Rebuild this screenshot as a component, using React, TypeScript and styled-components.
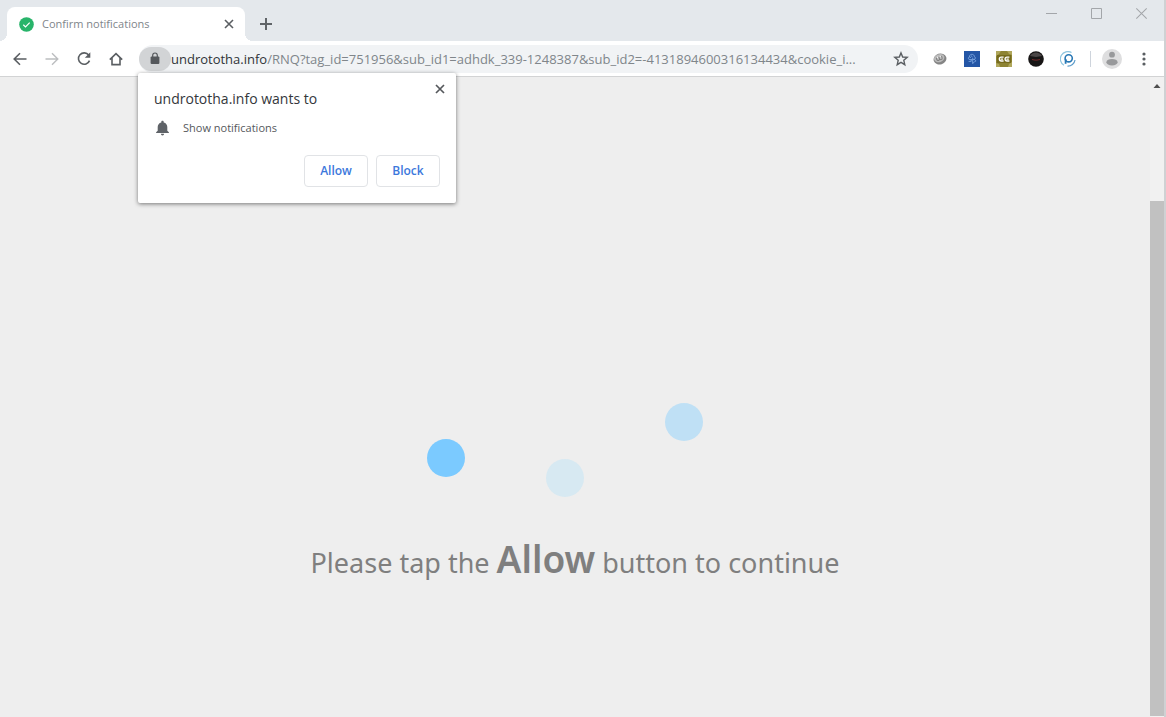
import React from "react";
import styled, { createGlobalStyle } from "styled-components";

const GlobalStyle = createGlobalStyle`
  *, *::before, *::after { box-sizing: border-box; }
  html, body, #root { height: 100%; }
  body {
    margin: 0;
    background: #eeeeee;
    font-family: "Open Sans", "Noto Sans", sans-serif;
    overflow: hidden;
  }
  button, input { font: inherit; }
`;

const Window = styled.div`
  display: flex;
  flex-direction: column;
  height: 100%;
  border-right: 2px solid #cfd1d3;
  background: #eeeeee;
`;

const TabStrip = styled.header`
  display: flex;
  align-items: flex-end;
  height: 41px;
  padding-left: 7px;
  background: #e4e8ec;
`;

const Tab = styled.div`
  position: relative;
  display: flex;
  align-items: center;
  width: 238px;
  height: 34px;
  padding: 0 8px 0 12px;
  border-radius: 8px 8px 0 0;
  background: #ffffff;

  &::before, &::after {
    content: "";
    position: absolute;
    bottom: 0;
    width: 8px;
    height: 8px;
  }
  &::before {
    left: -8px;
    background: radial-gradient(circle at 0 0, transparent 8px, #ffffff 8px);
  }
  &::after {
    right: -8px;
    background: radial-gradient(circle at 100% 0, transparent 8px, #ffffff 8px);
  }
`;

const TabTitle = styled.span`
  flex: 1;
  margin-left: 8px;
  color: #80858a;
  font-size: 11px;
  line-height: 16px;
`;

const IconButton = styled.button<{ $width?: number; $height?: number }>`
  display: flex;
  flex: none;
  align-items: center;
  justify-content: center;
  width: ${(p) => p.$width ?? 32}px;
  height: ${(p) => p.$height ?? 28}px;
  padding: 0;
  border: 0;
  background: none;
`;

const WindowControls = styled.div`
  display: flex;
  align-self: flex-start;
  margin-left: auto;
`;

const Toolbar = styled.nav`
  display: flex;
  align-items: center;
  height: 36px;
  padding: 0 4px 0 4px;
  border-bottom: 1px solid #d2d3d4;
  background: #ffffff;
`;

const AddressBar = styled.div`
  position: relative;
  display: flex;
  flex: 1;
  align-items: center;
  min-width: 0;
  height: 28px;
  margin: 0 6px 0 7px;
  border-radius: 14px;
  background: #f1f3f5;
`;

const SiteInfo = styled.button`
  display: flex;
  flex: none;
  align-items: center;
  justify-content: center;
  width: 32px;
  height: 24px;
  padding: 0;
  border: 0;
  border-radius: 12px;
  background: #d2d4d6;
`;

const Host = styled.label`
  color: #303338;
  font-size: 13px;
  line-height: 20px;
`;

const Path = styled.input`
  flex: 1;
  min-width: 0;
  height: 20px;
  padding: 0;
  border: 0;
  outline: 0;
  background: none;
  color: #80868b;
  font-size: 13px;
  line-height: 20px;
  text-overflow: ellipsis;
`;

const Separator = styled.span`
  width: 1px;
  height: 16px;
  margin: 0 5px 0 6px;
  background: #ced4dc;
`;

const Prompt = styled.section`
  position: absolute;
  top: 28px;
  left: -1px;
  z-index: 1;
  width: 318px;
  padding: 16px;
  border-radius: 2px;
  background: #ffffff;
  box-shadow: 0 1px 4px rgba(0, 0, 0, 0.5);
`;

const PromptClose = styled.div`
  position: absolute;
  top: 8px;
  right: 8px;
`;

const PromptTitle = styled.h2`
  margin: 0;
  color: #34373b;
  font-size: 14px;
  font-weight: 400;
  line-height: 20px;
`;

const Permission = styled.p`
  display: flex;
  align-items: center;
  gap: 12px;
  margin: 9px 0 17px;
  color: #55585c;
  font-size: 11px;
  line-height: 20px;
`;

const PromptActions = styled.div`
  display: flex;
  justify-content: flex-end;
  gap: 8px;
`;

const PromptButton = styled.button`
  width: 64px;
  height: 32px;
  padding: 0;
  border: 1px solid #e1e3e6;
  border-radius: 4px;
  background: #ffffff;
  color: #3c78dc;
  font-size: 12px;
  font-weight: 600;
  line-height: 20px;
`;

const Viewport = styled.div`
  display: flex;
  flex: 1;
  min-height: 0;
`;

const Page = styled.main`
  display: flex;
  flex: 1;
  flex-direction: column;
  align-items: center;
  justify-content: flex-end;
  padding-bottom: 122px;
`;

const Message = styled.p`
  margin: 30px 0 0;
  color: #7f7f7f;
  font-family: "Noto Sans", "Open Sans", sans-serif;
  font-size: 27px;
  line-height: 64px;
  white-space: nowrap;

  strong {
    font-size: 37px;
    font-weight: 600;
  }
`;

const ScrollTrack = styled.div`
  display: flex;
  flex-direction: column;
  width: 14px;
  background: #f1f1f1;
`;

const ScrollThumb = styled.div`
  flex: 1;
  margin: 108px 0 1px;
  background: #c1c1c1;
`;

const Cross = ({ size, color, width }: { size: number; color: string; width: number }) => (
  <svg width={size} height={size} viewBox="0 0 10 10" fill="none" stroke={color} strokeWidth={width}>
    <path d="M1 1l8 8M9 1L1 9" />
  </svg>
);

const toolbarStroke = { fill: "none", stroke: "#5a5e62", strokeWidth: 1.6 };

export default function App() {
  return (
    <>
      <GlobalStyle />
      <Window>
        <TabStrip>
          <Tab>
            <svg width="15" height="15" viewBox="0 0 15 15">
              <circle cx="7.5" cy="7.5" r="7.3" fill="#28b46a" />
              <path d="M4.3 7.8l2.200 2.100 4.200-4.300" fill="none" stroke="#ffffff" strokeWidth="1.2" />
            </svg>
            <TabTitle>Confirm notifications</TabTitle>
            <IconButton $width={16} $height={16} aria-label="Close tab">
              <Cross size={10} color="#5a5e62" width={1.6} />
            </IconButton>
          </Tab>
          <IconButton $width={42} $height={35} aria-label="New tab">
            <svg width="12" height="12" viewBox="0 0 12 12" stroke="#606468" strokeWidth="2">
              <path d="M6 0v12M0 6h12" />
            </svg>
          </IconButton>
          <WindowControls>
            <IconButton $width={45} $height={26} aria-label="Minimize">
              <svg width="11" height="11" viewBox="0 0 11 11" stroke="#a3a6aa">
                <path d="M0 5.5h11" />
              </svg>
            </IconButton>
            <IconButton $width={45} $height={26} aria-label="Maximize">
              <svg width="11" height="11" viewBox="0 0 11 11" stroke="#a3a6aa" fill="none">
                <path d="M.5.5h10v10H.5z" />
              </svg>
            </IconButton>
            <IconButton $width={45} $height={26} aria-label="Close window">
              <Cross size={13} color="#a3a6aa" width={0.8} />
            </IconButton>
          </WindowControls>
        </TabStrip>

        <Toolbar>
          <IconButton aria-label="Back">
            <svg width="16" height="16" viewBox="0 0 16 16" {...toolbarStroke}>
              <path d="M14.5 8H2.500M8 2.200L2.200 8 8 13.800" />
            </svg>
          </IconButton>
          <IconButton aria-label="Forward">
            <svg width="16" height="16" viewBox="0 0 16 16" {...toolbarStroke} stroke="#bcbec0" strokeWidth="1.4">
              <path d="M1.500 8h12M8 2.200L13.800 8 8 13.800" />
            </svg>
          </IconButton>
          <IconButton aria-label="Reload">
            <svg width="16" height="16" viewBox="0 0 16 16" {...toolbarStroke}>
              <path d="M12.700 4.100A5.700 5.700 0 1 0 13.500 9.600" />
              <path d="M14.300 1.300v5.500H8.800z" fill="#5a5e62" stroke="none" />
            </svg>
          </IconButton>
          <IconButton aria-label="Home">
            <svg width="16" height="16" viewBox="0 0 16 16" {...toolbarStroke}>
              <path d="M1.800 8.600L8 2.600l6.200 6M4 7v6.600h8V7" />
            </svg>
          </IconButton>

          <AddressBar>
            <SiteInfo aria-label="View site information">
              <svg width="10" height="13" viewBox="0 0 10 13">
                <rect x="0.6" y="4.6" width="8.8" height="7.4" rx="1" fill="#55585c" />
                <path d="M2.700 5V3.300a2.300 2.300 0 0 1 4.600 0V5" fill="none" stroke="#55585c" strokeWidth="1.2" />
              </svg>
            </SiteInfo>
            <Host htmlFor="address">undrototha.info</Host>
            <Path
              id="address"
              defaultValue="/RNQ?tag_id=751956&sub_id1=adhdk_339-1248387&sub_id2=-4131894600316134434&cookie_i..."
            />
            <IconButton $width={34} aria-label="Bookmark this tab">
              <svg width="16" height="16" viewBox="0 0 16 16" fill="none" stroke="#5a5e62" strokeWidth="1.4">
                <path d="M8 1.900l1.700 4.100 4.500.4-3.400 2.900 1 4.400L8 11.400l-3.800 2.300 1-4.400L1.800 6.400l4.500-.4z" />
              </svg>
            </IconButton>

            <Prompt aria-label="Permission request">
              <PromptClose>
                <IconButton $width={16} $height={16} aria-label="Dismiss">
                  <Cross size={10} color="#55585c" width={1.7} />
                </IconButton>
              </PromptClose>
              <PromptTitle>undrototha.info wants to</PromptTitle>
              <Permission>
                <svg width="17" height="16" viewBox="0 0 17 16" fill="#5f6368">
                  <path d="M8.500 .7c.8 0 1.200.5 1.200 1.200v.5c2.300.5 3.600 2.300 3.600 4.700v3.600l1.600 1.600v.8H2.100v-.8l1.600-1.600V7.100c0-2.400 1.300-4.200 3.600-4.700v-.5c0-.7.400-1.200 1.200-1.200z" />
                  <path d="M6.900 13.800h3.200a1.600 1.600 0 0 1-3.200 0z" />
                </svg>
                Show notifications
              </Permission>
              <PromptActions>
                <PromptButton>Allow</PromptButton>
                <PromptButton>Block</PromptButton>
              </PromptActions>
            </Prompt>
          </AddressBar>

          <IconButton aria-label="Link extension">
            <svg width="14" height="14" viewBox="0 0 14 14">
              <g transform="rotate(-18 7 7)">
                <ellipse cx="7" cy="7" rx="6.500" ry="5.500" fill="#858585" />
                <ellipse cx="6.500" cy="6" rx="5.300" ry="4" fill="#bbbbbb" />
                <path d="M3.800 4.500v2a1.400 1.400 0 0 0 2.800 0v-2M6.600 6.500a1.400 1.400 0 0 0 2.800 0v-2" fill="none" stroke="#808080" strokeWidth="1" />
                <path d="M5 4v1.500M8 4v1.500" stroke="#f2f2f2" />
              </g>
            </svg>
          </IconButton>
          <IconButton aria-label="Tree extension">
            <svg width="16" height="16" viewBox="0 0 16 16">
              <rect width="16" height="16" fill="#2456a6" />
              <g fill="none" stroke="#86afe6" strokeWidth="0.8">
                <path d="M8.300 8.600H5.900C4 8.600 3.900 6.300 5.400 6c-.3-3.400 5-3.500 5-.4 1.500.6 1.100 2.600-.2 2.800M7 4.700l1.400 1.100M5.400 6c.8-.1 1.300.4 1.400 1M4.600 10.400h2.600V8.600M8.700 6.800v6M8.700 12.100c1.500 0 1.400-1.900 3-1.900 0-1.500-.9-1.800-3-1.800" />
              </g>
            </svg>
          </IconButton>
          <IconButton aria-label="CC extension">
            <svg width="16" height="16" viewBox="0 0 16 16">
              <rect width="16" height="16" fill="#8d8332" />
              <path d="M0 0h5L3 3l-3 2zM11 0h5v4l-3-1zM0 12l3 1 1 3H0zM12 16l1-3 3-2v5z" fill="#b0a75c" />
              <path d="M1 4h14v8H1z" fill="#766b1d" />
              <g fill="none" stroke="#ffffff" strokeWidth="1.7">
                <path d="M7.600 6.200H5.200a1.900 1.900 0 0 0 0 3.800h2.400M13.400 6.200H11a1.900 1.900 0 0 0 0 3.800h2.400M4.600 8.100h2.400M10.400 8.100h2.400" strokeWidth="1.300" />
              </g>
            </svg>
          </IconButton>
          <IconButton aria-label="Dark extension">
            <svg width="16" height="16" viewBox="0 0 16 16">
              <circle cx="8" cy="8" r="7.800" fill="#171515" />
              <path d="M2 5a7 7 0 0 1 12 0L8 6z" fill="#4b4747" />
              <path d="M4 8.500l3 .6h2l3-.6" fill="none" stroke="#7e2c2c" strokeWidth="0.9" />
            </svg>
          </IconButton>
          <IconButton aria-label="Search extension">
            <svg width="16" height="16" viewBox="0 0 16 16" fill="none">
              <path d="M11.500 1.600A7.200 7.200 0 1 0 4 14.300" stroke="#8ec5e0" strokeWidth="1.200" />
              <path d="M7.500 15.200A7.200 7.200 0 0 0 15 9" stroke="#5c9cca" strokeWidth="1.200" />
              <circle cx="8.700" cy="7.300" r="3.600" stroke="#2878b5" strokeWidth="1.600" />
              <path d="M5.600 8v4.800" stroke="#2878b5" strokeWidth="1.800" />
            </svg>
          </IconButton>
          <Separator />
          <IconButton aria-label="Profile">
            <svg width="20" height="20" viewBox="0 0 20 20">
              <circle cx="10" cy="10" r="10" fill="#dededf" />
              <circle cx="10" cy="5.700" r="2.900" fill="#98999b" />
              <ellipse cx="10" cy="13.200" rx="5.600" ry="3.300" fill="#98999b" />
            </svg>
          </IconButton>
          <IconButton aria-label="Menu">
            <svg width="4" height="14" viewBox="0 0 4 14" fill="#5a5e62">
              <circle cx="2" cy="2" r="1.600" />
              <circle cx="2" cy="7" r="1.600" />
              <circle cx="2" cy="12" r="1.600" />
            </svg>
          </IconButton>
        </Toolbar>

        <Viewport>
          <Page>
            <svg width="296" height="94" viewBox="0 0 296 94" role="img" aria-label="Loading">
              <circle cx="19" cy="55" r="19" fill="#7bcaff" />
              <circle cx="138" cy="75" r="19" fill="#d7e9f2" />
              <circle cx="257" cy="19" r="19" fill="#bfe0f5" />
            </svg>
            <Message>
              Please tap the <strong>Allow</strong> button to continue
            </Message>
          </Page>
          <ScrollTrack>
            <svg width="14" height="16" viewBox="0 0 14 16">
              <path d="M3.500 11L7 7l3.500 4z" fill="#505050" />
            </svg>
            <ScrollThumb />
          </ScrollTrack>
        </Viewport>
      </Window>
    </>
  );
}
